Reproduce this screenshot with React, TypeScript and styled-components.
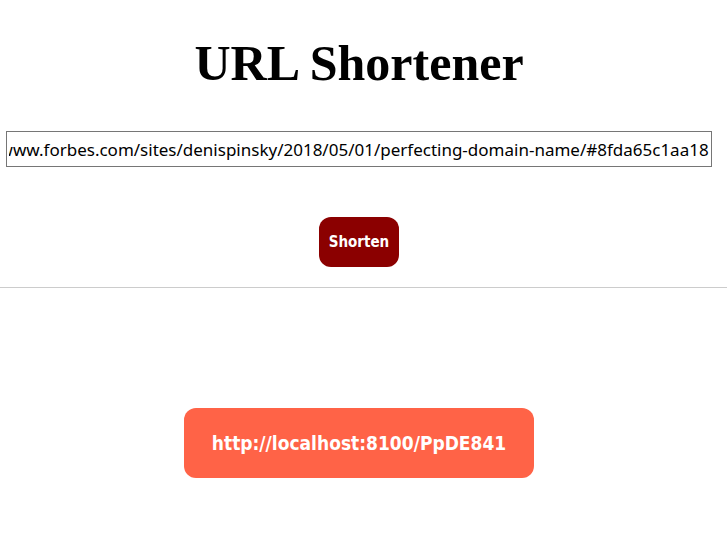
import { useLayoutEffect, useRef, useState } from 'react';
import styled, { createGlobalStyle } from 'styled-components';

const GlobalStyle = createGlobalStyle`
  *, *::before, *::after { box-sizing: border-box; }
  body { margin: 0; background: #fff; color: #000; }
`;

const Page = styled.main`
  display: flex;
  flex-direction: column;
`;

const Form = styled.form`
  display: flex;
  flex-direction: column;
  align-items: center;
  padding: 33px 15px 20px 6px;
  border-bottom: 1px solid #ccc;
`;

const Title = styled.h1`
  margin: 0 0 38px;
  font: bold 50px/60px "Liberation Serif", serif;
`;

const UrlInput = styled.input`
  width: 100%;
  height: 36px;
  margin-bottom: 50px;
  padding: 1px 2px;
  border: 1px solid #767676;
  border-radius: 0;
  outline: none;
  background: #fff;
  color: #000;
  font: 17px "Noto Sans", sans-serif;
`;

const ShortenButton = styled.button`
  height: 50px;
  width: 80px;
  padding: 0;
  border: 0;
  border-radius: 12px;
  background: #8b0000;
  color: #fff;
  font: bold 15px "DejaVu Sans Condensed", "Noto Sans", sans-serif;
  cursor: pointer;
`;

const Result = styled.section`
  display: flex;
  justify-content: center;
  padding: 120px 15px 60px 6px;
`;

const ShortLink = styled.a`
  display: flex;
  align-items: center;
  justify-content: center;
  width: 350px;
  height: 70px;
  border-radius: 12px;
  background: #ff6347;
  color: #fff;
  font: bold 19px "DejaVu Sans Condensed", "Noto Sans", sans-serif;
  text-decoration: none;
`;

export default function App() {
  const [url, setUrl] = useState(
    'https://www.forbes.com/sites/denispinsky/2018/05/01/perfecting-domain-name/#8fda65c1aa18',
  );
  const field = useRef<HTMLInputElement>(null);

  useLayoutEffect(() => {
    if (field.current) field.current.scrollLeft = field.current.scrollWidth;
  }, []);

  return (
    <Page>
      <GlobalStyle />
      <Form onSubmit={(event) => event.preventDefault()}>
        <Title>URL Shortener</Title>
        <UrlInput
          ref={field}
          type="text"
          aria-label="URL"
          spellCheck={false}
          value={url}
          onChange={(event) => setUrl(event.target.value)}
        />
        <ShortenButton type="submit">Shorten</ShortenButton>
      </Form>
      <Result>
        <ShortLink href="http://localhost:8100/PpDE841">http://localhost:8100/PpDE841</ShortLink>
      </Result>
    </Page>
  );
}
